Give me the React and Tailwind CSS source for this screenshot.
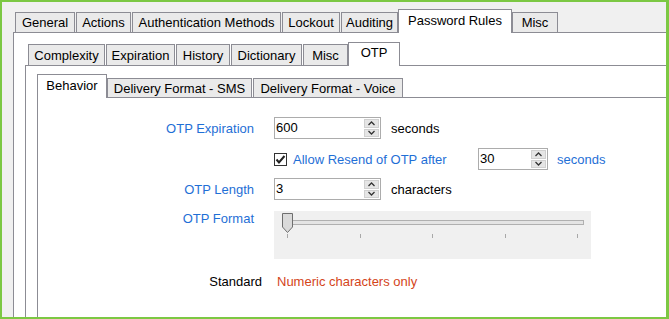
import React from 'react';

const font = { fontFamily: '"Liberation Sans", Arial, sans-serif' };

function Tab({ label, w, selected, ml, h, pt }) {
  if (selected) {
    return (
      <div className={`relative z-10 -mb-px h-[24px] bg-white border border-b-0 border-[#8c8c94] text-center leading-[15px] ${pt} ${w} ${ml}`}>
        {label}
      </div>
    );
  }
  return (
    <div className={`flex items-center justify-center bg-[#eaeaea] border border-b-0 border-[#8c8c94] leading-[15px] ${h} ${w} ${ml}`}>
      {label}
    </div>
  );
}

function Chevron({ up }) {
  return (
    <svg width="7" height="5" viewBox="0 0 7 5">
      <polyline
        points={up ? '0.5,4 3.5,1 6.5,4' : '0.5,1 3.5,4 6.5,1'}
        fill="none"
        stroke="#333"
        strokeWidth="1.3"
      />
    </svg>
  );
}

function SpinBox({ value, w }) {
  return (
    <div className={`flex h-[22px] border border-[#acacac] bg-white ${w}`}>
      <div className="flex-1 pl-[1px] leading-[20px] text-black">{value}</div>
      <div className="flex flex-col w-[16px] py-[1px] pr-[1px] gap-[1px]">
        <div className="flex-1 flex items-center justify-center bg-[#e5e5e5] border border-[#d0d0d0]">
          <Chevron up />
        </div>
        <div className="flex-1 flex items-center justify-center bg-[#e5e5e5] border border-[#d0d0d0]">
          <Chevron />
        </div>
      </div>
    </div>
  );
}

export default function App() {
  const ticks = ['left-[13px]', 'left-[86px]', 'left-[158px]', 'left-[231px]', 'left-[303px]'];

  return (
    <div style={font} className="w-[669px] h-[319px] overflow-hidden border-2 border-r-[3px] border-[#7cc843] bg-[#f0f0f0] text-[13px] text-black flex flex-col">
      {/* level 1 */}
      <div className="ml-[11px] mt-[7px] flex-1 flex flex-col">
        <div className="flex items-end h-[23px] pl-[2px]">
          <Tab label="General" w="w-[60px]" h="h-[20px]" />
          <Tab label="Actions" w="w-[55px]" h="h-[20px]" ml="ml-[1px]" />
          <Tab label="Authentication Methods" w="w-[149px]" h="h-[20px]" ml="ml-[1px]" />
          <Tab label="Lockout" w="w-[58px]" h="h-[20px]" ml="ml-[1px]" />
          <Tab label="Auditing" w="w-[57px]" h="h-[20px]" ml="ml-[1px]" />
          <Tab label="Password Rules" w="w-[114px]" selected pt="pt-[3px]" />
          <Tab label="Misc" w="w-[46px]" h="h-[20px]" />
        </div>
        <div className="flex-1 flex flex-col bg-white border-l border-t border-[#8c8c94]">
          {/* level 2 */}
          <div className="ml-[11px] mt-[9px] flex-1 flex flex-col">
            <div className="flex items-end h-[23px] pl-[3px]">
              <Tab label="Complexity" w="w-[77px]" h="h-[21px]" />
              <Tab label="Expiration" w="w-[69px]" h="h-[21px]" ml="ml-[1px]" />
              <Tab label="History" w="w-[54px]" h="h-[21px]" ml="ml-[1px]" />
              <Tab label="Dictionary" w="w-[71px]" h="h-[21px]" ml="ml-[1px]" />
              <Tab label="Misc" w="w-[45px]" h="h-[21px]" ml="ml-[1px]" />
              <Tab label="OTP" w="w-[52px]" selected pt="pt-[2px]" />
            </div>
            <div className="flex-1 flex flex-col bg-white border-l border-t border-[#8c8c94]">
              {/* level 3 */}
              <div className="ml-[11px] mt-[8px] flex-1 flex flex-col">
                <div className="flex items-end h-[23px]">
                  <Tab label="Behavior" w="w-[70px]" selected pt="pt-[3px]" />
                  <Tab label="Delivery Format - SMS" w="w-[145px]" h="h-[19px]" />
                  <Tab label="Delivery Format - Voice" w="w-[150px]" h="h-[19px]" ml="ml-[1px]" />
                </div>
                <div className="flex-1 bg-white border-l border-t border-[#8c8c94] pt-[19px] leading-[15px]">
                  {/* OTP Expiration */}
                  <div className="flex items-center h-[22px]">
                    <div className="w-[216px] text-right text-[#1f6fd6]">OTP Expiration</div>
                    <div className="ml-[20px]">
                      <SpinBox value="600" w="w-[107px]" />
                    </div>
                    <div className="ml-[10px]">seconds</div>
                  </div>

                  {/* Allow resend */}
                  <div className="flex items-center h-[22px] mt-[9px]">
                    <div className="w-[236px]" />
                    <div className="w-[13px] h-[13px] border border-[#333] bg-white flex items-center justify-center">
                      <svg width="11" height="11" viewBox="0 0 11 11">
                        <polyline points="1.5,5.5 4,8.5 9.5,2" fill="none" stroke="#222" strokeWidth="2" />
                      </svg>
                    </div>
                    <div className="ml-[6px] w-[185px] text-[#1f6fd6]">Allow Resend of OTP after</div>
                    <SpinBox value="30" w="w-[70px]" />
                    <div className="ml-[9px] text-[#1f6fd6]">seconds</div>
                  </div>

                  {/* OTP Length */}
                  <div className="flex items-center h-[22px] mt-[8px]">
                    <div className="w-[216px] text-right text-[#1f6fd6]">OTP Length</div>
                    <div className="ml-[20px]">
                      <SpinBox value="3" w="w-[107px]" />
                    </div>
                    <div className="ml-[10px]">characters</div>
                  </div>

                  {/* OTP Format */}
                  <div className="flex items-start mt-[11px]">
                    <div className="w-[216px] text-right text-[#1f6fd6]">OTP Format</div>
                    <div className="relative ml-[20px] w-[317px] h-[48px] bg-[#f0f0f0]">
                      <div className="absolute left-[12px] top-[9px] w-[298px] h-[5px] border border-[#b0b0b0] bg-[#e4e4e4]" />
                      <svg className="absolute left-[8px] top-[2px]" width="11" height="20" viewBox="0 0 11 20">
                        <path d="M0.5 0.5 H10.5 V14 L5.5 19.5 L0.5 14 Z" fill="#dadada" stroke="#6e6e6e" />
                      </svg>
                      {ticks.map((t) => (
                        <div key={t} className={`absolute top-[23px] w-px h-[4px] bg-[#a8a8a8] ${t}`} />
                      ))}
                    </div>
                  </div>

                  {/* Standard */}
                  <div className="flex items-center mt-[15px]">
                    <div className="w-[224px] text-right">Standard</div>
                    <div className="ml-[15px] text-[#d4451a]">Numeric characters only</div>
                  </div>
                </div>
              </div>
            </div>
          </div>
        </div>
      </div>
    </div>
  );
}
